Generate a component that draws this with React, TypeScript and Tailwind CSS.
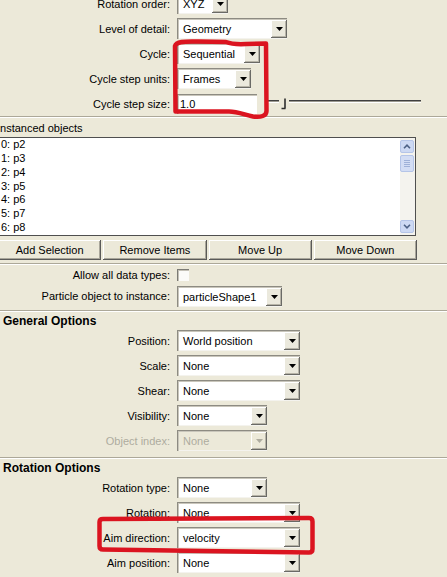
import React from "react";

const FONT = "font-[family-name:'Liberation_Sans',Arial,sans-serif]";

function DownTriangle({ disabled }: { disabled?: boolean }) {
  return (
    <svg width="7" height="4" viewBox="0 0 7 4">
      <path d="M0 0h7L3.5 4z" fill={disabled ? "#aeac9f" : "#000"} />
    </svg>
  );
}

function Combo({
  width,
  value,
  disabled,
}: {
  width: string;
  value: string;
  disabled?: boolean;
}) {
  return (
    <div
      className={`flex h-[21px] ${width} ${
        disabled ? "bg-[#ece9d9] text-[#aeac9f]" : "bg-white text-black"
      } shadow-[inset_1px_1px_0_#8d8b82,inset_2px_2px_0_#c9c6bb,inset_-1px_-1px_0_#f4f3ee]`}
    >
      <div className="flex flex-1 items-center overflow-hidden whitespace-nowrap pl-[6px] pt-[1px]">
        {value}
      </div>
      <div
        className={`mb-[1px] mt-[2px] flex w-[16px] shrink-0 items-center justify-center ${
          disabled ? "bg-[#ece9d9]" : "bg-[#ebe9dd]"
        } shadow-[inset_-1px_-1px_0_#6a6a66,inset_1px_1px_0_#ffffff,inset_-2px_-2px_0_#b7b4a8]`}
      >
        <DownTriangle disabled={disabled} />
      </div>
    </div>
  );
}

function Row({
  label,
  children,
  dim,
  height = "h-[25px]",
}: {
  label: string;
  children: React.ReactNode;
  dim?: boolean;
  height?: string;
}) {
  return (
    <div className={`flex ${height} items-center`}>
      <div
        className={`w-[170px] shrink-0 whitespace-nowrap text-right ${
          dim ? "text-[#aeac9f]" : "text-black"
        }`}
      >
        {label}
      </div>
      <div className="ml-[7px] flex items-center">{children}</div>
    </div>
  );
}

function Separator({ className = "" }: { className?: string }) {
  return (
    <div
      className={`h-[2px] w-full border-b border-t border-b-white border-t-[#aca899] ${className}`}
    />
  );
}

function SectionTitle({ title }: { title: string }) {
  return (
    <div className="h-[16px] pl-[3px] pt-[2px] text-[12px] font-bold leading-[14px]">
      {title}
    </div>
  );
}

function Chevron({ up }: { up?: boolean }) {
  return (
    <svg width="8" height="5" viewBox="0 0 8 5">
      <path
        d={up ? "M1 4.2L4 1.2L7 4.2" : "M1 0.8L4 3.8L7 0.8"}
        fill="none"
        stroke="#4d6185"
        strokeWidth="1.6"
      />
    </svg>
  );
}

function PushButton({ label }: { label: string }) {
  return (
    <div className="flex items-center justify-center bg-[#ece9d9] shadow-[inset_-1px_-1px_0_#5a5a58,inset_1px_1px_0_#ffffff,inset_-2px_-2px_0_#a9a69a]">
      {label}
    </div>
  );
}

const instanced = ["0: p2", "1: p3", "2: p4", "3: p5", "4: p6", "5: p7", "6: p8"];

export default function App() {
  return (
    <div
      className={`relative h-[577px] w-[447px] overflow-hidden bg-[#ece9d9] text-[11px] leading-[14px] text-black ${FONT}`}
    >
      <div className="-mt-[9px] flex flex-col">
        <Row label="Rotation order:">
          <Combo width="w-[51px]" value="XYZ" />
        </Row>
        <Row label="Level of detail:">
          <Combo width="w-[110px]" value="Geometry" />
        </Row>
        <Row label="Cycle:">
          <Combo width="w-[83px]" value="Sequential" />
        </Row>
        <Row label="Cycle step units:">
          <Combo width="w-[74px]" value="Frames" />
        </Row>
        <Row label="Cycle step size:">
          <div className="flex h-[20px] w-[80px] items-center bg-white pl-[3px] pt-[1px] shadow-[inset_1px_1px_0_#8d8b82,inset_2px_2px_0_#c9c6bb]">
            1.0
          </div>
          {/* step size slider */}
          <div className="relative ml-[8px] h-[14px] w-[156px]">
            <div className="absolute left-0 right-0 top-[3px] h-[1px] bg-[#3f3f3f]" />
            <div className="absolute left-0 right-0 top-[4px] h-[1px] bg-[#9b998f]" />
            <div className="absolute left-0 right-0 top-[5px] h-[1px] bg-white" />
            <svg
              className="absolute left-[14px] top-0"
              width="10"
              height="14"
              viewBox="0 0 10 14"
            >
              <rect x="0" y="2" width="10" height="10" fill="#ece9d9" />
              <path
                d="M6 1.5V11.5M2.5 11.5H6.5"
                fill="none"
                stroke="#2e2e2e"
                strokeWidth="1.6"
              />
            </svg>
          </div>
        </Row>

        <Separator />

        <div className="-ml-[4px] flex h-[19px] items-center pl-[1px]">
          Instanced objects
        </div>

        {/* instanced objects list */}
        <div className="-ml-[3px] flex h-[99px] w-[419px] border border-[#4f4f4f] bg-white">
          <div className="flex flex-1 flex-col pl-[3px]">
            {instanced.map((item) => (
              <div key={item} className="h-[14px] leading-[13px]">
                {item}
              </div>
            ))}
          </div>
          <div className="flex w-[15px] flex-col bg-[#f4f3ee] py-[2px] pr-[1px]">
            <div className="flex h-[13px] items-center justify-center rounded-[2px] border border-[#b5c5e8] bg-[#cdd9f3]">
              <Chevron up />
            </div>
            <div className="mt-[2px] flex h-[17px] flex-col items-center justify-center gap-[1px] rounded-[2px] border border-[#b5c5e8] bg-[#d3ddf4]">
              <div className="h-[1px] w-[6px] bg-[#9fb1d8]" />
              <div className="h-[1px] w-[6px] bg-[#9fb1d8]" />
              <div className="h-[1px] w-[6px] bg-[#9fb1d8]" />
              <div className="h-[1px] w-[6px] bg-[#9fb1d8]" />
            </div>
            <div className="flex-1" />
            <div className="flex h-[13px] items-center justify-center rounded-[2px] border border-[#b5c5e8] bg-[#cdd9f3]">
              <Chevron />
            </div>
          </div>
        </div>

        <div className="-ml-[2px] mt-[4px] grid h-[20px] w-[419px] grid-cols-4 gap-[2px]">
          <PushButton label="Add Selection" />
          <PushButton label="Remove Items" />
          <PushButton label="Move Up" />
          <PushButton label="Move Down" />
        </div>

        <Separator className="mt-[3px]" />

        <Row label="Allow all data types:" height="h-[19px]">
          <div className="h-[12px] w-[12px] bg-[#fbfbf8] shadow-[inset_1px_1px_0_#7c7b75,inset_2px_2px_0_#c4c1b6]" />
        </Row>
        <Row label="Particle object to instance:" height="h-[24px]">
          <Combo width="w-[105px]" value="particleShape1" />
        </Row>

        <Separator className="mt-[2px]" />
        <SectionTitle title="General Options" />

        <Row label="Position:">
          <Combo width="w-[123px]" value="World position" />
        </Row>
        <Row label="Scale:">
          <Combo width="w-[123px]" value="None" />
        </Row>
        <Row label="Shear:">
          <Combo width="w-[123px]" value="None" />
        </Row>
        <Row label="Visibility:">
          <Combo width="w-[90px]" value="None" />
        </Row>
        <Row label="Object index:" dim>
          <Combo width="w-[90px]" value="None" disabled />
        </Row>

        <Separator className="mt-[4px]" />
        <SectionTitle title="Rotation Options" />

        <Row label="Rotation type:">
          <Combo width="w-[90px]" value="None" />
        </Row>
        <Row label="Rotation:">
          <Combo width="w-[123px]" value="None" />
        </Row>
        <Row label="Aim direction:">
          <Combo width="w-[123px]" value="velocity" />
        </Row>
        <Row label="Aim position:">
          <Combo width="w-[123px]" value="None" />
        </Row>
        <Row label="Aim axis:">
          <Combo width="w-[123px]" value="None" />
        </Row>
      </div>

      {/* hand-drawn red markers */}
      <svg
        className="pointer-events-none absolute left-0 top-0"
        width="447"
        height="577"
        viewBox="0 0 447 577"
      >
        <path
          d="M175 46 C176 42 184 41 198 41.5 L226 42 C231 44 236 44.5 246 44 L266 43.5 L266.5 111 C266.5 116 261 117.5 253 116.5 C245 115 238 111.5 229 111.5 L175.5 111.5 Z"
          fill="none"
          stroke="#db1420"
          strokeWidth="4.5"
          strokeLinejoin="round"
        />
        <path
          d="M99.5 522 Q99.5 519 103 519 L309 518 Q312.5 518 312.5 521.5 L312.5 549 Q312.5 552.5 309 552.5 L103 549.5 Q99.5 549.5 99.5 546 Z"
          fill="none"
          stroke="#db1420"
          strokeWidth="4.5"
          strokeLinejoin="round"
        />
      </svg>
    </div>
  );
}
